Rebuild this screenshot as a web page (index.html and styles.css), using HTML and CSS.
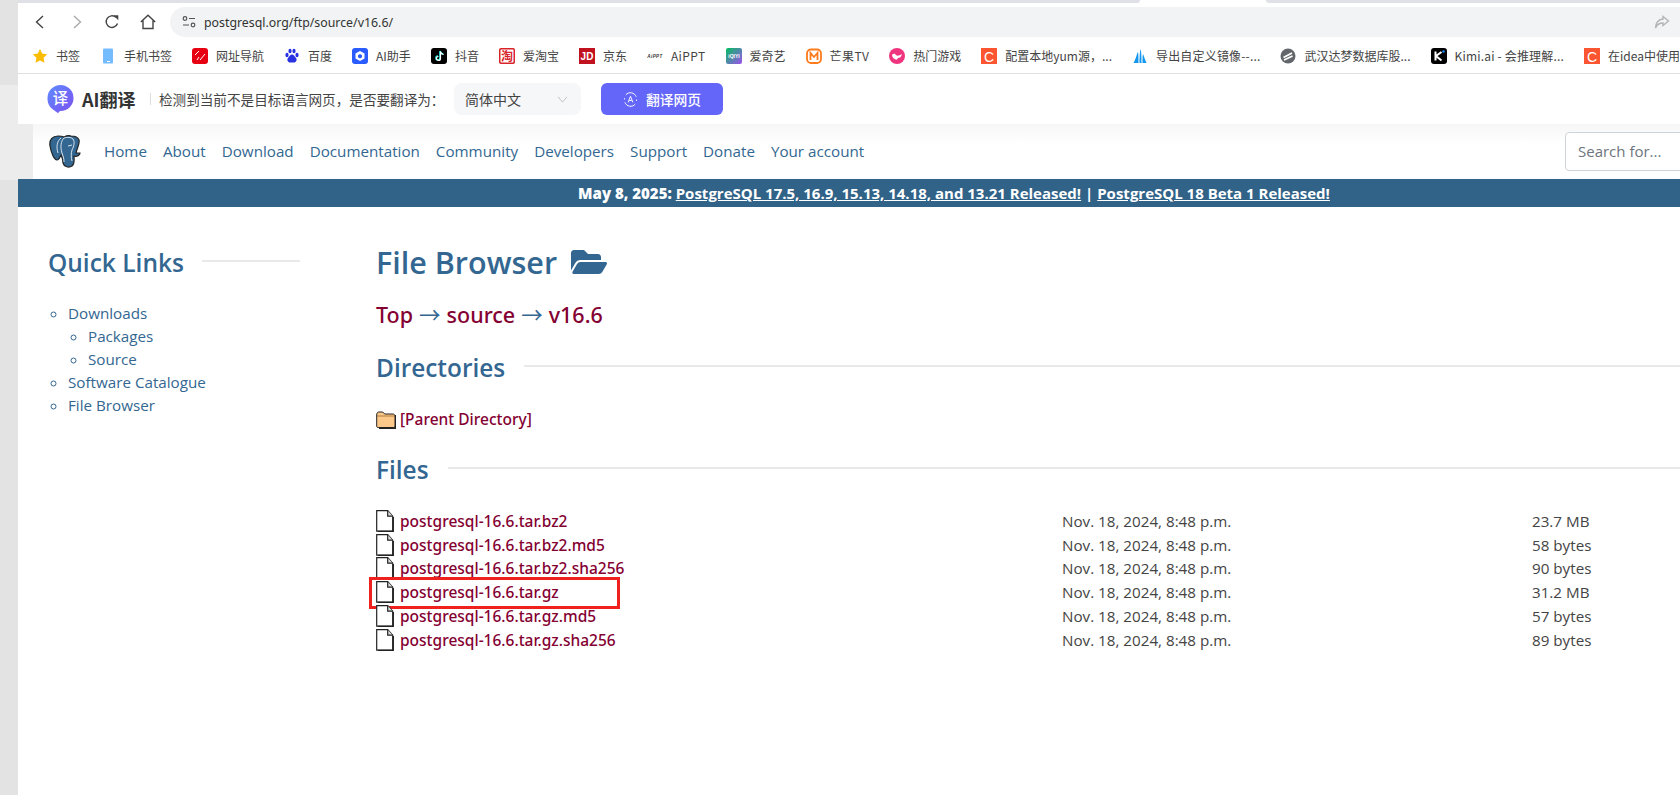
FILE: index.html
```html
<!DOCTYPE html>
<html lang="en">
<head>
<meta charset="utf-8">
<title>File Browser</title>
<link rel="stylesheet" href="styles.css">
</head>
<body>
<svg class="defs" width="0" height="0"><symbol id="file" viewBox="0 0 18 22"><path class="ic-page" d="M.700.700h11l5 5.500v15H.700z"/><path class="ic-fd" d="M11.700.700v5.500h5"/><path class="ic-edge" d="M17.300 7v14.400H2"/></symbol></svg>
<aside class="rail"><div class="rail-light"></div></aside>
<div class="main">
  <div class="tabstrip"><div class="tab-gray"></div><div class="tab-active"></div><div class="tab-rest"></div></div>
  <div class="toolbar">
    <svg class="tb-icon" viewBox="0 0 16 16"><path class="st-dark" d="M11 2 4.500 8l6.500 6"/></svg>
    <svg class="tb-icon" viewBox="0 0 16 16"><path class="st-gray" d="M5 2l6.500 6L5 14"/></svg>
    <svg class="tb-icon" viewBox="0 0 16 16"><path class="st-dark" d="M13.500 9.500A5.800 5.800 0 1 1 11.800 3.200"/><path class="fl-dark" d="M9.300 1.200h5v5z"/></svg>
    <svg class="tb-icon" viewBox="0 0 16 16"><path class="st-dark" d="M.8 8 8 1.200 15.200 8M3 6.500v8h10v-8"/></svg>
    <div class="omnibox">
      <svg class="tune" viewBox="0 0 14 14"><circle class="st-thin" cx="3" cy="3.500" r="1.800"/><path class="st-thin" d="M7 3.500h6M1 10h6"/><circle class="st-thin" cx="11" cy="10" r="1.800"/></svg>
      <span class="url">postgresql.org/ftp/source/v16.6/</span>
      <svg class="share" viewBox="0 0 16 16"><path class="st-share" d="M9 2.500 14.500 7 9 11.500V9C5.500 9 3 10.500 1.500 14 1.500 9 4.500 5.200 9 5z"/></svg>
    </div>
  </div>
  <nav class="bookmarks">
    <a class="bm"><svg class="bi" viewBox="0 0 16 16"><path fill="#fbbc04" d="M8 1l2.200 4.600 5 .7-3.600 3.500.9 5L8 12.400l-4.500 2.400.9-5L.8 6.300l5-.7z"/></svg>书签</a>
    <a class="bm"><svg class="bi" viewBox="0 0 16 16"><rect x="3" y="0.500" width="10" height="15" rx="1" fill="#74bcff"/><rect x="7" y="13" width="3" height="1" fill="#fff"/></svg>手机书签</a>
    <a class="bm"><svg class="bi" viewBox="0 0 16 16"><rect width="16" height="16" rx="3" fill="#e60012"/><path d="M3 7 7 3M8 12l5-6M5 12l2-3" stroke="#fff" fill="none"/></svg>网址导航</a>
    <a class="bm"><svg class="bi" viewBox="0 0 16 16"><g fill="#2932e1"><ellipse cx="3" cy="7" rx="1.600" ry="2.200"/><ellipse cx="6" cy="3" rx="1.600" ry="2.200"/><ellipse cx="10" cy="3" rx="1.600" ry="2.200"/><ellipse cx="13" cy="7" rx="1.600" ry="2.200"/><path d="M8 6.500c2 0 2.500 2 4 3.500 1.500 2 0 4.500-2 4.500H6c-2 0-3.500-2.500-2-4.500 1.500-1.500 2-3.500 4-3.500z"/></g></svg>百度</a>
    <a class="bm"><svg class="bi" viewBox="0 0 16 16"><rect width="16" height="16" rx="3" fill="#2b5cff"/><path d="M8 3l4.500 2.500v5L8 13l-4.500-2.500v-5z" fill="#fff"/><path d="M8 6l2 1.200v2L8 10.400 6 9.200v-2z" fill="#2b5cff"/></svg>AI助手</a>
    <a class="bm"><svg class="bi" viewBox="0 0 16 16"><rect width="16" height="16" rx="3" fill="#000"/><path d="M9 3v7a2 2 0 1 1-2-2M9 3c.3 1.500 1.500 2.800 3.200 3" stroke="#25f4ee" stroke-width="1.600" fill="none"/><path d="M9.500 3.500v7a2 2 0 1 1-2-2M9.500 3.500c.3 1.500 1.500 2.800 3.200 3" stroke="#fff" stroke-width="1.200" fill="none"/></svg>抖音</a>
    <a class="bm"><svg class="bi" viewBox="0 0 16 16"><rect width="16" height="16" rx="2" fill="#d8232a"/><rect x="1.500" y="1.500" width="13" height="13" fill="#fff" rx="1"/><text class="bi-cjk" x="8" y="12.500" fill="#d8232a">淘</text></svg>爱淘宝</a>
    <a class="bm"><svg class="bi" viewBox="0 0 16 16"><rect width="16" height="16" fill="#c1121f"/><text class="bi-latin" x="8" y="12" fill="#fff">JD</text></svg>京东</a>
    <a class="bm lat"><svg class="bi" viewBox="0 0 16 16"><text class="bi-tiny" x="8" y="10" fill="#333">AiPPT</text></svg>AiPPT</a>
    <a class="bm"><svg class="bi" viewBox="0 0 16 16"><defs><linearGradient id="iq" x1="0" y1="0" x2="1" y2="1"><stop offset="0" stop-color="#00c060"/><stop offset="1" stop-color="#a050f0"/></linearGradient></defs><rect width="16" height="16" rx="2" fill="url(#iq)"/><text class="bi-small" x="8" y="10" fill="#fff">iQIYI</text></svg>爱奇艺</a>
    <a class="bm lat"><svg class="bi" viewBox="0 0 16 16"><rect x="1" y="1.500" width="14" height="13.500" rx="4" fill="#fff" stroke="#ff7a1a" stroke-width="1.800"/><path d="M4.500 12V5l3.500 4 3.500-4v7" fill="none" stroke="#ff7a1a" stroke-width="1.800"/></svg>芒果TV</a>
    <a class="bm"><svg class="bi" viewBox="0 0 16 16"><circle cx="8" cy="8" r="8" fill="#f0357f"/><path d="M3 7c2-2 3-1 4 0s3 1 6-1c-1 3-2 4-4 4-1 2-2 2-3 1-1 0-3-2-3-4z" fill="#fff"/></svg>热门游戏</a>
    <a class="bm"><svg class="bi" viewBox="0 0 16 16"><rect width="16" height="16" fill="#fc5531"/><text class="bi-c" x="8" y="13.500" fill="#fff">C</text></svg>配置本地yum源，...</a>
    <a class="bm lat2"><svg class="bi" viewBox="0 0 16 16"><path d="M1.500 15C4 11 5 5 6 4c.5 2 .5 8 .5 11zM7.500 15C7.500 9 8 3 8.500 1c1 3 1 9 1 14zM10.500 15c0-4 0-7 .5-9 1 2 2 6 3.500 9z" fill="#1296ee"/></svg>导出自定义镜像--...</a>
    <a class="bm"><svg class="bi" viewBox="0 0 16 16"><circle cx="8" cy="8" r="7.500" fill="#63666a"/><path d="M3.500 9.500 12 5M4 12l8.500-4" stroke="#fff" stroke-width="1.700"/></svg>武汉达梦数据库股...</a>
    <a class="bm lat2"><svg class="bi" viewBox="0 0 16 16"><rect width="16" height="16" rx="3" fill="#000"/><path d="M4.500 3.500v9M10.500 4 5 8l5.500 4.500" stroke="#fff" stroke-width="2" fill="none"/><circle cx="12.500" cy="3.500" r="1.200" fill="#1a8cff"/></svg>Kimi.ai - 会推理解...</a>
    <a class="bm"><svg class="bi" viewBox="0 0 16 16"><rect width="16" height="16" fill="#fc5531"/><text class="bi-c" x="8" y="13.500" fill="#fff">C</text></svg>在idea中使用</a>
  </nav>
  <div class="translate">
    <svg class="tr-logo" viewBox="0 0 28 30"><defs><linearGradient id="trg" x1="0" y1="0" x2="1" y2="1"><stop offset="0" stop-color="#5f8cff"/><stop offset="1" stop-color="#7b4ff0"/></linearGradient></defs><path fill="url(#trg)" d="M14 0a13.500 13.500 0 1 1 0 27c-1 0-2 1-2.500 2.500C9 26 .5 25 .5 13.500A13.500 13.500 0 0 1 14 0z"/><text class="tr-logo-t" x="14" y="19.500">译</text></svg>
    <strong class="tr-name">AI翻译</strong>
    <span class="tr-sep"></span>
    <span class="tr-msg">检测到当前不是目标语言网页，是否要翻译为：</span>
    <div class="tr-select"><span>简体中文</span><svg class="tr-chev" viewBox="0 0 12 8"><path d="M1 1l5 6 5-6"/></svg></div>
    <button class="tr-btn"><svg class="tr-btn-i" viewBox="0 0 16 16"><path d="M14 5A6.500 6.500 0 0 0 3 3M2 11a6.500 6.500 0 0 0 11 2M8 4.500 5.500 11M8 4.500 10.500 11M6.500 9h3M1.800 6.500 1.500 8M14.500 8l-.2 1.500"/></svg>翻译网页</button>
  </div>
  <div class="page">
    <div class="nav-shade">
      <header class="site-nav">
        <svg class="pg-logo" viewBox="0 0 32 33"><path class="pg-body" d="M9 1C4 1 0 4 1 11c1 6 4 14 7 14 2 0 3-3 4-5 1 2 2 4 2 8 1 4 6 5 9 3s2-7 2-10c3 1 6-1 6-3h-4c1-5 4-9 3-13-1-3-5-4-8-4-3-1-5 0-7 1-2-1-4-1-6-1z"/><path class="pg-line" d="M12 3C8 6 7 12 9 18M15 3c3-1 7-1 9 1 2 3 1 7-1 11-1 3-1 8 0 11M15 3c-3 3-4 9-2 15 1 3 2 5 2 9M23 10l-4 1"/></svg>
        <a class="nl">Home</a><a class="nl">About</a><a class="nl">Download</a><a class="nl">Documentation</a><a class="nl">Community</a><a class="nl">Developers</a><a class="nl">Support</a><a class="nl">Donate</a><a class="nl">Your account</a>
        <div class="search">Search for...</div>
      </header>
    </div>
    <div class="banner"><b>May 8, 2025:</b> <a>PostgreSQL 17.5, 16.9, 15.13, 14.18, and 13.21 Released!</a> | <a>PostgreSQL 18 Beta 1 Released!</a></div>
    <div class="columns">
      <section class="side">
        <h2 class="side-h"><span>Quick Links</span><i class="rule"></i></h2>
        <ul class="ql">
          <li>Downloads
            <ul><li>Packages</li><li>Source</li></ul>
          </li>
          <li>Software Catalogue</li>
          <li>File Browser</li>
        </ul>
      </section>
      <main class="content">
        <h1 class="title">File Browser <svg class="fo" viewBox="0 0 576 512"><path d="M572.694 292.093L500.27 416.248A63.997 63.997 0 0 1 444.989 448H45.025c-18.523 0-30.064-20.093-20.731-36.093l72.424-124.155A64 64 0 0 1 152 256h399.964c18.523 0 30.064 20.093 20.73 36.093zM152 224h328v-48c0-26.51-21.49-48-48-48H272l-64-64H48C21.49 64 0 85.49 0 112v278.046l69.077-118.418C86.214 242.25 117.989 224 152 224z"/></svg></h1>
        <div class="crumbs"><a>Top</a> <span class="arr">→</span> <a>source</a> <span class="arr">→</span> <a>v16.6</a></div>
        <h2 class="sec sec-dirs"><span>Directories</span><i class="rule"></i></h2>
        <div class="row parent"><svg class="ic-folder" viewBox="0 0 20 18"><path class="ic-shadow" d="M3 4h17v14H3z"/><path class="ic-fold" d="M.7 4c0-2 1-3 2-3h4l2 2h8.500c1 0 1.800 1 1.800 2v10c0 1-.8 1.500-1.800 1.500H2.200C1.200 16.500.7 16 .7 15z"/><path class="ic-crease" d="M1 5h18"/></svg><a class="flink">[Parent Directory]</a></div>
        <h2 class="sec sec-files"><span>Files</span><i class="rule"></i></h2>
        <div class="files">
          <div class="row file"><svg class="ic-file"><use href="#file"/></svg><a class="flink">postgresql-16.6.tar.bz2</a><span class="date">Nov. 18, 2024, 8:48 p.m.</span><span class="size">23.7 MB</span></div>
          <div class="row file"><svg class="ic-file"><use href="#file"/></svg><a class="flink">postgresql-16.6.tar.bz2.md5</a><span class="date">Nov. 18, 2024, 8:48 p.m.</span><span class="size">58 bytes</span></div>
          <div class="row file"><svg class="ic-file"><use href="#file"/></svg><a class="flink">postgresql-16.6.tar.bz2.sha256</a><span class="date">Nov. 18, 2024, 8:48 p.m.</span><span class="size">90 bytes</span></div>
          <div class="row file"><svg class="ic-file"><use href="#file"/></svg><a class="flink">postgresql-16.6.tar.gz</a><span class="date">Nov. 18, 2024, 8:48 p.m.</span><span class="size">31.2 MB</span><div class="marker"></div></div>
          <div class="row file"><svg class="ic-file"><use href="#file"/></svg><a class="flink">postgresql-16.6.tar.gz.md5</a><span class="date">Nov. 18, 2024, 8:48 p.m.</span><span class="size">57 bytes</span></div>
          <div class="row file"><svg class="ic-file"><use href="#file"/></svg><a class="flink">postgresql-16.6.tar.gz.sha256</a><span class="date">Nov. 18, 2024, 8:48 p.m.</span><span class="size">89 bytes</span></div>
        </div>
      </main>
    </div>
  </div>
</div>
</body>
</html>
```

FILE: styles.css
```css
* { box-sizing: border-box; }
html, body { margin: 0; height: 795px; overflow: hidden; }
body { display: flex; background: #fff; font-family: "Open Sans", "Noto Sans CJK SC", sans-serif; color: #212529; }
.defs { position: absolute; }

.rail { flex: none; width: 18px; height: 795px; padding-top: 85px; background: #e3e3e3; }
.rail-light { height: 95px; background: #ececec; }
.main { flex: none; width: 1662px; }

.tabstrip { display: flex; height: 3px; }
.tab-gray { width: 1122px; background: #dfe1e6; border-bottom-right-radius: 3px; }
.tab-active { width: 126px; background: #fff; }
.tab-rest { flex: 1; background: #dfe1e6; border-bottom-left-radius: 3px; }

.toolbar { display: flex; align-items: flex-start; height: 41px; padding: 4px 0 0 14px; background: #fff; }
.tb-icon { flex: none; width: 16px; height: 16px; margin: 7px 21px 0 0; }
.tb-icon:nth-child(2) { margin-right: 19px; }
.tb-icon:nth-child(3) { margin-right: 20px; }
.tb-icon:nth-child(4) { margin-right: 14px; }
.st-dark, .st-gray { fill: none; stroke-width: 1.400; }
.st-dark { stroke: #444; }
.st-gray { stroke: #aaa; }
.fl-dark { fill: #444; }
.omnibox { flex: 1; display: flex; align-items: center; height: 30px; padding: 0 10px 0 12px; background: #f1f3f4; border-radius: 15px 0 0 15px; }
.tune { flex: none; width: 14px; height: 14px; margin-right: 8px; }
.st-thin { fill: none; stroke: #555; stroke-width: 1.200; }
.url { flex: 1; font: 12.350px "Noto Sans", sans-serif; color: #333; }
.share { flex: none; width: 16px; height: 16px; }
.st-share { fill: none; stroke: #b5b5b5; stroke-width: 1.400; }

.bookmarks { display: flex; align-items: center; gap: 20px; height: 30px; padding: 0 0 6px 14px; overflow: hidden; white-space: nowrap; background: #fff; border-bottom: 1px solid #e0e0e0; font: 12px "Noto Sans CJK SC", sans-serif; color: #444; }
.bm { flex: none; display: flex; align-items: center; gap: 8px; }
.lat { letter-spacing: .4px; }
.lat2 { letter-spacing: .18px; }
.bi { flex: none; width: 16px; height: 16px; }
.bi-cjk { font: 12px "Noto Sans CJK SC", sans-serif; text-anchor: middle; font-weight: 700; }
.bi-latin { font: 700 10px "Liberation Sans", sans-serif; text-anchor: middle; }
.bi-tiny { font: italic 700 4.500px "Liberation Sans", sans-serif; text-anchor: middle; }
.bi-small { font: 700 5px "Liberation Sans", sans-serif; text-anchor: middle; }
.bi-c { font: 14px "Liberation Sans", sans-serif; text-anchor: middle; }

.translate { display: flex; align-items: center; height: 50px; padding-left: 29px; background: #fff; font-family: "Noto Sans CJK SC", sans-serif; }
.tr-logo { flex: none; width: 27px; height: 29px; margin-right: 8px; }
.tr-logo-t { font: 500 16px "Noto Sans CJK SC", sans-serif; fill: #fff; text-anchor: middle; }
.tr-name { font-size: 18px; font-weight: 700; color: #333; width: 55px; white-space: nowrap; }
.tr-sep { width: 1px; height: 12px; margin: 0 8px 0 13px; background: #ddd; }
.tr-msg { width: 295px; font-size: 13.600px; color: #444; white-space: nowrap; }
.tr-select { display: flex; align-items: center; justify-content: space-between; width: 127px; height: 32px; padding: 0 13px 0 11px; background: #f6f7f9; border-radius: 8px; font-size: 14px; color: #444; }
.tr-chev { width: 11px; height: 7px; fill: none; stroke: #b8bcc4; }
.tr-btn { display: flex; align-items: center; justify-content: center; gap: 8px; width: 122px; height: 32px; margin-left: 20px; border: 0; border-radius: 6px; background: #6366f8; color: #fff; font: 500 13.800px "Noto Sans CJK SC", sans-serif; }
.tr-btn-i { width: 15px; height: 15px; fill: none; stroke: #fff; }

.page { width: 1872px; }
.nav-shade { padding-left: 15px; background: linear-gradient(to right, #ececec, #fbfbfb); }
.site-nav { display: flex; align-items: center; height: 55px; padding: 0 0 2px 16px; background: linear-gradient(to bottom, #f6f6f6, #fff 35%); }
.pg-logo { flex: none; width: 32px; height: 33px; margin: 2px 23px 0 0; }
.pg-body { fill: #336791; stroke: #222; stroke-width: 1.200; }
.pg-line { fill: none; stroke: #fff; stroke-width: .8; }
.nl { margin-right: 16px; font-size: 15.200px; color: #336791; white-space: nowrap; }
.search { flex: none; width: 325px; height: 39px; margin: 2px 0 0 auto; padding-left: 12px; line-height: 37px; border: 1px solid #ced4da; border-radius: 4px; background: #fff; font-size: 15px; color: #6c757d; white-space: nowrap; }

.banner { height: 28px; line-height: 28px; background: #316288; color: #fff; text-align: center; font-size: 15px; font-weight: 700; }
.banner a { text-decoration: underline; }

.columns { display: flex; padding: 37px 0 0 30px; }
.side { flex: none; width: 328px; }
.rule { flex: 1; height: 2px; margin-bottom: 3px; background: #e9e9e9; }
.side-h { display: flex; align-items: center; gap: 18px; width: 252px; height: 36px; margin: 0; font-size: 24.500px; font-weight: 600; color: #336791; }
.ql { margin: 22px 0 0; padding: 0 0 0 20px; list-style: circle; font-size: 15.200px; line-height: 23.100px; color: #336791; }
.ql ul { margin: 0; padding: 0 0 0 20px; list-style: circle; }

.content { flex: 1; color: #336791; }
.title { display: flex; align-items: center; gap: 14px; height: 36px; margin: 0; font-size: 30.500px; font-weight: 600; color: #336791; }
.fo { width: 36px; height: 32px; fill: #336791; }
.crumbs { margin-top: 20px; height: 30px; font: 500 21.500px/30px "Noto Sans", sans-serif; word-spacing: .4px; color: #840032; white-space: nowrap; }
.arr { font-family: "Noto Sans CJK SC", sans-serif; font-weight: 400; line-height: 1; color: #336791; }
.sec { display: flex; align-items: center; gap: 19px; height: 36px; margin: 19px 0 0; font-size: 24.400px; font-weight: 600; color: #336791; }
.sec-files { margin-top: 20.500px; }
.row { display: flex; align-items: center; position: relative; }
.parent { height: 24px; margin-top: 22px; }
.files { margin-top: 21.500px; }
.file { height: 23.800px; }
.flink { margin-left: 6px; font: 500 15.500px "Noto Sans", sans-serif; color: #840032; white-space: nowrap; }
.file .flink { width: 662px; }
.date { width: 470px; font-size: 15.200px; color: #444; }
.size { font-size: 15.200px; color: #444; }
.ic-folder { flex: none; width: 20px; height: 18px; margin-top: 2px; margin-left: 0; margin-right: 4px; }
.parent .flink { margin-left: 0; }
.ic-shadow { fill: #222; }
.ic-fold { fill: #fdc98a; stroke: #222; stroke-width: 1; }
.ic-crease { fill: none; stroke: #8a5a20; stroke-width: .7; }
.ic-file { flex: none; width: 18px; height: 22px; }
.ic-page { fill: #fff; stroke: #222; stroke-width: 1.200; }
.ic-fd { fill: #ddd; stroke: #222; stroke-width: 1.200; }
.ic-edge { fill: none; stroke: #222; stroke-width: 1.300; }
.marker { position: absolute; left: -7px; top: -3px; width: 251px; height: 32px; border: 3px solid #f0201c; pointer-events: none; }
```
